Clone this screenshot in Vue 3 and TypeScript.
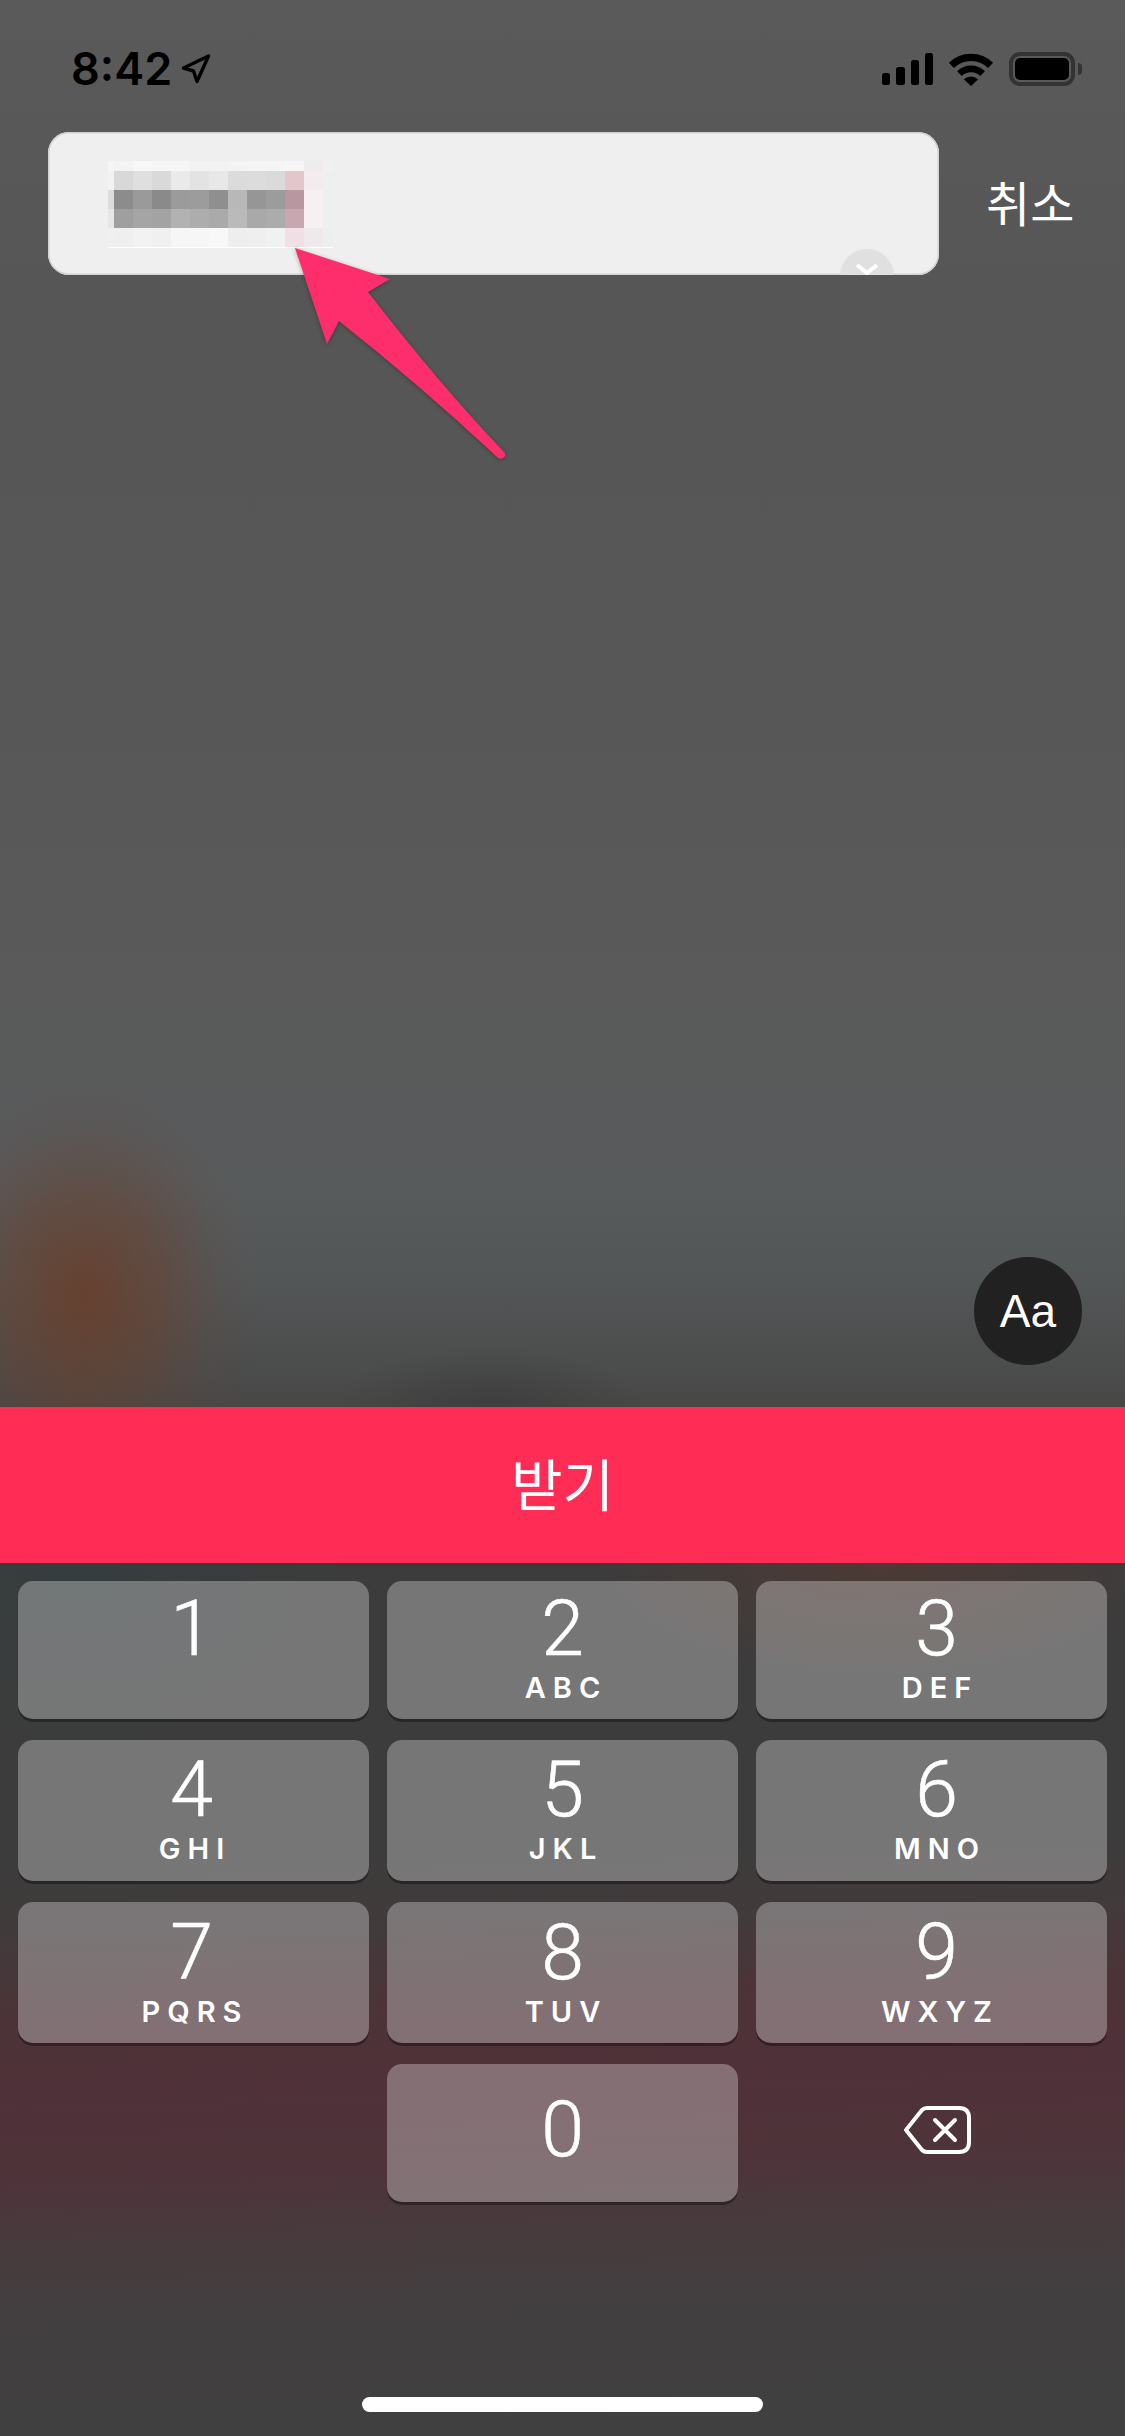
<script setup lang="ts">
interface Key { digit: string; letters: string; row: number }

const keys: Key[] = [
  { digit: '1', letters: '', row: 1 },
  { digit: '2', letters: 'ABC', row: 1 },
  { digit: '3', letters: 'DEF', row: 1 },
  { digit: '4', letters: 'GHI', row: 2 },
  { digit: '5', letters: 'JKL', row: 2 },
  { digit: '6', letters: 'MNO', row: 2 },
  { digit: '7', letters: 'PQRS', row: 3 },
  { digit: '8', letters: 'TUV', row: 3 },
  { digit: '9', letters: 'WXYZ', row: 3 },
]

const mosaic: string[][] = [
  ['#f6f6f6', '#f3f3f3', '#f7f7f7', '#f6f6f6', '#f6f6f6', '#f2f2f2', '#f2f2f2', '#f3f3f3', '#f5f5f5', '#f5f5f5', '#f6f6f6', '#f0eced', '#f2f0f0', '#f1f1f1'],
  ['#f2f2f2', '#d8d8d8', '#dfdfdf', '#d9d9d9', '#eaeaea', '#e3e3e3', '#e8e8e8', '#dbdbdb', '#dcdcdc', '#d9dbda', '#e3c5cc', '#f2ecee', '#eef0ef', '#eeeeee'],
  ['#dcdcdc', '#8c8c8c', '#9a9a9a', '#8a8a8a', '#9b9b9b', '#9c9c9c', '#8f8f8f', '#b8b8b8', '#969696', '#9b9d9c', '#b997a0', '#f6f0f2', '#eef0f0', '#eeeeee'],
  ['#e6e6e6', '#9f9f9f', '#a5a5a5', '#a3a3a3', '#b2b2b2', '#adadad', '#aaaaaa', '#bababa', '#a9a9a9', '#abadac', '#c9a7b0', '#f6f0f2', '#eef0f0', '#eeeeee'],
  ['#f0f0f0', '#efefef', '#f2f2f2', '#f0f0f0', '#f6f6f6', '#f6f6f6', '#f8f8f8', '#eeeeee', '#efefef', '#f0f2f2', '#f0e0e5', '#eeeaec', '#ecefee', '#eeeeee'],
]
</script>

<template>
  <div class="screen">
    <section class="top">
      <header class="status">
        <div class="status-left">
          <span class="time">8:42</span>
          <svg class="loc" viewBox="0 0 30 30" width="30" height="30">
            <path d="M2.5 14 L27.5 2 L16 27.5 L12.5 17 Z" fill="none" stroke="#000" stroke-width="3.4" stroke-linejoin="round" />
          </svg>
        </div>
        <div class="status-right">
          <div class="signal">
            <i class="b1"></i><i class="b2"></i><i class="b3"></i><i class="b4"></i>
          </div>
          <svg class="wifi" viewBox="0 0 44 33" width="46" height="34">
            <path d="M3 13 A 27 27 0 0 1 41 13" fill="none" stroke="#000" stroke-width="7" />
            <path d="M10.8 21 A 16 16 0 0 1 33.2 21" fill="none" stroke="#000" stroke-width="6.5" />
            <path d="M22 33 L15 26.5 Q22 21 29 26.5 Z" fill="#000" />
          </svg>
          <div class="battery"><span class="level"></span></div>
          <span class="nub"></span>
        </div>
      </header>

      <div class="search-row">
        <div class="field">
          <div class="mosaic">
            <template v-for="(row, r) in mosaic" :key="r">
              <span v-for="(c, i) in row" :key="i" :style="{ background: c }"></span>
            </template>
          </div>
          <div class="clear">
            <svg viewBox="0 0 26 14" width="26" height="14">
              <path d="M3 3 L13 11 L23 3" fill="none" stroke="#fff" stroke-width="4" />
            </svg>
          </div>
        </div>
        <span class="cancel">취소</span>
      </div>

      <button class="aa">Aa</button>
    </section>

    <button class="cta">받기</button>

    <section class="keyboard">
      <div class="keys">
        <div v-for="k in keys" :key="k.digit" class="key" :class="'row' + k.row">
          <span class="digit">{{ k.digit }}</span>
          <span v-if="k.letters" class="letters">{{ k.letters }}</span>
        </div>
        <div class="blank"></div>
        <div class="key zero"><span class="digit">0</span></div>
        <div class="del">
          <svg viewBox="0 0 68 50" width="68" height="50">
            <path d="M24 3 H56 Q66 3 66 13 V37 Q66 47 56 47 H24 Q21 47 19 45 L3 25 L19 5 Q21 3 24 3 Z" fill="none" stroke="#fff" stroke-width="4" stroke-linejoin="round" />
            <path d="M32 15 L52 35 M52 15 L32 35" fill="none" stroke="#fff" stroke-width="4" stroke-linecap="round" />
          </svg>
        </div>
      </div>
      <div class="home"></div>
    </section>

    <svg class="pointer" viewBox="0 0 1125 500" width="1125" height="500">
      <path d="M295 248 L390 279 L368 292 Q440 385 504 452 Q507 456 503 458 Q499 460 496 456 Q420 385 339 321 L327 344 Z" fill="#fe2e6d" />
    </svg>
  </div>
</template>

<style scoped>
.screen {
  position: relative;
  width: 1125px;
  height: 2436px;
  display: flex;
  flex-direction: column;
  overflow: hidden;
  font-family: Inter, "Noto Sans CJK KR", sans-serif;
  color: #fff;
}

.top {
  height: 1407px;
  flex: none;
  box-sizing: border-box;
  display: flex;
  flex-direction: column;
  background:
    radial-gradient(ellipse 175px 215px at 85px 1295px, rgba(108, 60, 38, 0.8), rgba(105, 64, 46, 0.5) 45%, rgba(100, 70, 60, 0.16) 78%, rgba(100, 70, 60, 0) 100%),
    radial-gradient(ellipse 150px 60px at 490px 1407px, rgba(58, 58, 58, 0.7), rgba(60, 60, 60, 0) 100%),
    linear-gradient(180deg, #5a5a5a 0, #565656 300px, #575757 700px, #5a5a5a 1000px, #585b5c 1190px, #535657 1280px, #4b4c4c 1370px, #484746 1407px);
}

.status {
  height: 132px;
  box-sizing: border-box;
  padding: 52px 43px 0 71px;
  display: flex;
  justify-content: space-between;
  align-items: flex-start;
  color: #000;
}

.status-left {
  display: flex;
  align-items: center;
  gap: 9px;
}

.time {
  font-size: 45px;
  font-weight: 600;
  line-height: 34px;
}

.loc {
  display: block;
}

.status-right {
  display: flex;
  align-items: flex-start;
}

.signal {
  width: 51px;
  height: 32px;
  margin: 1px 15px 0 0;
  display: flex;
  align-items: flex-end;
  gap: 6px;
}

.signal i {
  display: block;
  width: 8.5px;
  background: #000;
  border-radius: 2.5px;
}

.signal .b1 { height: 12px; }
.signal .b2 { height: 18px; }
.signal .b3 { height: 25px; }
.signal .b4 { height: 32px; }

.wifi {
  display: block;
  margin-right: 15px;
}

.battery {
  width: 66px;
  height: 34px;
  box-sizing: border-box;
  border: 4px solid #333;
  border-radius: 11px;
  padding: 2px;
  display: flex;
}

.level {
  flex: 1;
  background: #000;
  border-radius: 5px;
}

.nub {
  width: 4px;
  height: 12px;
  margin: 11px 0 0 3px;
  background: #333;
  border-radius: 0 4px 4px 0;
}

.search-row {
  display: flex;
  align-items: center;
  padding-left: 48px;
}

.field {
  position: relative;
  width: 891px;
  height: 143px;
  box-sizing: border-box;
  padding: 29px 0 0 60px;
  background: #efefef;
  border-radius: 21px;
  box-shadow: inset 0 0 0 1.5px #d2d2d2;
  overflow: hidden;
}

.mosaic {
  width: 225px;
  display: grid;
  grid-template-columns: 6px repeat(11, 19px) 10px 0;
  grid-template-rows: 10px repeat(4, 19px);
  border-bottom: 1px solid #fff;
}

.clear {
  position: absolute;
  left: 792px;
  top: 117px;
  width: 54px;
  height: 54px;
  box-sizing: border-box;
  padding-top: 13px;
  border-radius: 50%;
  background: #e0e0e0;
  display: flex;
  justify-content: center;
  align-items: flex-start;
}

.clear svg {
  display: block;
}

.cancel {
  margin: 0 0 6px 47px;
  font-family: "Noto Sans CJK KR", sans-serif;
  font-size: 48px;
  font-weight: 400;
  line-height: 60px;
}

.aa {
  width: 108px;
  height: 108px;
  margin: auto 43px 42px auto;
  padding: 0;
  border: 0;
  border-radius: 50%;
  background: #212121;
  color: #fff;
  font-family: "Liberation Sans", sans-serif;
  font-size: 46px;
  font-weight: 400;
  line-height: 108px;
  text-align: center;
}

.cta {
  flex: none;
  height: 156px;
  width: 100%;
  border: 0;
  padding: 0 0 7px;
  background: #ff2d55;
  color: #fff;
  font-family: "Noto Sans CJK KR", sans-serif;
  font-size: 56px;
  font-weight: 400;
  text-align: center;
}

.keyboard {
  flex: 1;
  display: flex;
  flex-direction: column;
  box-sizing: border-box;
  padding: 18px 18px 24px;
  background:
    radial-gradient(ellipse 300px 120px at 880px 0, rgba(95, 55, 45, 0.45), rgba(95, 55, 45, 0) 100%),
    radial-gradient(ellipse 260px 160px at 80px 20px, rgba(50, 62, 64, 0.6), rgba(50, 62, 64, 0) 100%),
    linear-gradient(178deg, #3c3c3c 0, #3c3c3c 300px, #423a3b 380px, #4b3438 450px, #503139 530px, #4e343a 620px, #483a3d 680px, #433f40 760px, #404040 873px);
}

.keys {
  display: grid;
  grid-template-columns: repeat(3, 351px);
  grid-template-rows: 138px 141px 141px 138px;
  column-gap: 18px;
  row-gap: 21px;
}

.key {
  display: flex;
  flex-direction: column;
  align-items: center;
  box-sizing: border-box;
  background: rgba(255, 255, 255, 0.3);
  border-radius: 15px;
  box-shadow: 0 3px 0 rgba(0, 0, 0, 0.35);
}

.key:nth-child(3n + 1) { padding-right: 4px; }
.key:nth-child(3n) { padding-left: 10px; }

.row1 { padding-top: 21px; }
.row2 { padding-top: 23px; }
.row3 { padding-top: 24px; }
.zero { padding-top: 39px; }

.digit {
  font-family: Roboto, sans-serif;
  font-size: 77px;
  font-weight: 300;
  line-height: 54px;
  -webkit-text-stroke: 0.6px #fff;
}

.letters {
  margin-top: 21px;
  font-family: Inter, sans-serif;
  font-size: 29px;
  font-weight: 600;
  line-height: 22px;
  letter-spacing: 7px;
  margin-right: -7px;
}

.del {
  display: flex;
  justify-content: center;
  align-items: center;
  padding: 0 0 7px 11px;
}

.del svg {
  display: block;
}

.home {
  width: 401px;
  height: 15px;
  margin: auto auto 0 auto;
  background: #fff;
  border-radius: 8px;
}

.pointer {
  position: absolute;
  left: 0;
  top: 0;
  filter: drop-shadow(0 1px 2px rgba(0, 0, 0, 0.3));
}
</style>
